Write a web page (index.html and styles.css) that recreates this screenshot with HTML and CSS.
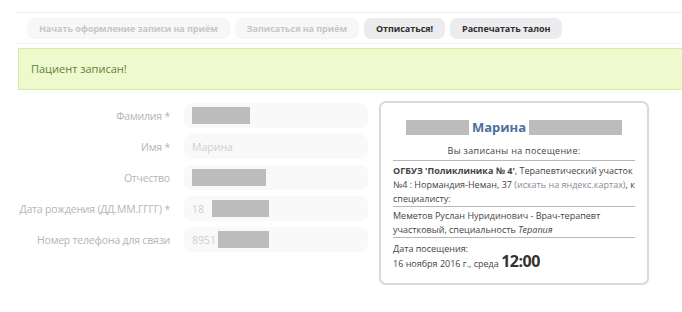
FILE: index.html
```html
<!DOCTYPE html>
<html lang="ru">
<head>
    <meta charset="UTF-8">
    <meta name="viewport" content="width=device-width, initial-scale=1.0">
    <title>Запись на приём</title>
    <link rel="stylesheet" href="styles.css">
</head>
<body>
    <div class="toolbar">
        <span class="btn btn-off">Начать оформление записи на приём</span>
        <span class="btn btn-off">Записаться на приём</span>
        <span class="btn">Отписаться!</span>
        <span class="btn">Распечатать талон</span>
    </div>

    <div class="alert">Пациент записан!</div>

    <div class="content">
        <div class="form">
            <div class="row">
                <label>Фамилия *</label>
                <div class="field"><span class="hidden" style="width: 58px"></span></div>
            </div>
            <div class="row">
                <label>Имя *</label>
                <div class="field"><span class="value">Марина</span></div>
            </div>
            <div class="row">
                <label>Отчество</label>
                <div class="field"><span class="hidden" style="width: 74px"></span></div>
            </div>
            <div class="row">
                <label>Дата рождения (ДД.ММ.ГГГГ) *</label>
                <div class="field"><span class="value gap">18</span><span class="hidden" style="width: 57px"></span></div>
            </div>
            <div class="row">
                <label>Номер телефона для связи</label>
                <div class="field"><span class="value">8951</span><span class="hidden" style="width: 51px"></span></div>
            </div>
        </div>

        <div class="ticket">
            <div class="ticket-name">
                <span class="hidden" style="width: 63px"></span>
                <b>Марина</b>
                <span class="hidden" style="width: 93px"></span>
            </div>
            <div class="ticket-sub">Вы записаны на посещение:</div>
            <div class="ticket-block first">
                <b>ОГБУЗ 'Поликлиника № 4'</b>, Терапевтический участок №4 : Нормандия-Неман, 37 <span class="link">(искать на яндекс.картах)</span>, к специалисту:
            </div>
            <div class="ticket-block">
                Меметов Руслан Нуридинович - Врач-терапевт участковый, специальность <i>Терапия</i>
            </div>
            <div class="ticket-block last">
                Дата посещения:<br>
                16 ноября 2016 г., среда <span class="time">12:00</span>
            </div>
        </div>
    </div>
</body>
</html>
```

FILE: styles.css
```css
body {
    margin: 0;
    font-family: "Open Sans", Arial, sans-serif;
    background: #ffffff;
    color: #333;
}

.toolbar {
    margin: 12px 0 0 15px;
    border-top: 1px solid #efefef;
    border-bottom: 1px solid #f4f4f4;
    padding: 5px 0 4px 12px;
    display: flex;
    gap: 5px;
}

.btn {
    display: inline-block;
    height: 21px;
    line-height: 21px;
    padding: 0 12px;
    border-radius: 7px;
    background: #ececef;
    color: #2e2e2e;
    font-size: 9px;
    font-weight: 700;
    letter-spacing: -0.05px;
}

.btn-off {
    background: #f7f7f8;
    color: #c6c6ca;
}

.alert {
    margin: 4px 0 0 18px;
    height: 40px;
    line-height: 40px;
    border: 1px solid #d9eaa6;
    border-right: none;
    background: #eefacd;
    color: #5f8236;
    font-size: 11px;
    padding-left: 12px;
}

.content {
    display: flex;
    align-items: flex-start;
    margin-top: 11px;
}

.form {
    width: 368px;
    padding-top: 2px;
}

.row {
    display: flex;
    align-items: center;
    margin-bottom: 6px;
}

.row label {
    width: 184px;
    text-align: right;
    font-size: 10.5px;
    color: #b5b5b5;
    padding-right: 14px;
    box-sizing: border-box;
    letter-spacing: -0.2px;
}

.field {
    width: 184px;
    height: 25px;
    border-radius: 8px;
    background: #f9f9f9;
    display: flex;
    align-items: center;
    padding-left: 8px;
    box-sizing: border-box;
}

.value {
    font-size: 10.5px;
    color: #cfcfcf;
    margin-right: 2px;
}

.value.gap {
    margin-right: 8px;
}

.hidden {
    display: inline-block;
    height: 17px;
    background: #bcbcbc;
}

.ticket {
    margin-left: 11px;
    width: 270px;
    box-sizing: border-box;
    border: 2px solid #d8dae3;
    border-radius: 7px;
    box-shadow: 0 1px 2px rgba(0, 0, 0, 0.06);
    padding: 14px 12px 13px 12px;
    font-size: 9px;
    color: #444;
}

.ticket-name {
    display: flex;
    justify-content: center;
    align-items: center;
    gap: 3px;
    height: 20px;
    margin-bottom: 7px;
}

.ticket-name b {
    font-size: 13px;
    color: #4d6f9e;
}

.ticket-name .hidden {
    height: 15px;
}

.ticket-sub {
    text-align: center;
    line-height: 14px;
    padding-bottom: 2px;
    border-bottom: 1px solid #b8b8b8;
    letter-spacing: 0.3px;
}

.ticket-block {
    line-height: 13.5px;
    padding: 2px 0 1px;
    border-bottom: 1px solid #b8b8b8;
}

.ticket-block.first {
    line-height: 14px;
    padding: 3px 0 0;
}

.ticket-block.last {
    border-bottom: none;
    line-height: 13px;
    padding: 4px 0 0;
}

.link {
    color: #8a8a9a;
}

.time {
    font-size: 16px;
    line-height: 13px;
    font-weight: bold;
    color: #333;
    letter-spacing: -0.5px;
}
```
